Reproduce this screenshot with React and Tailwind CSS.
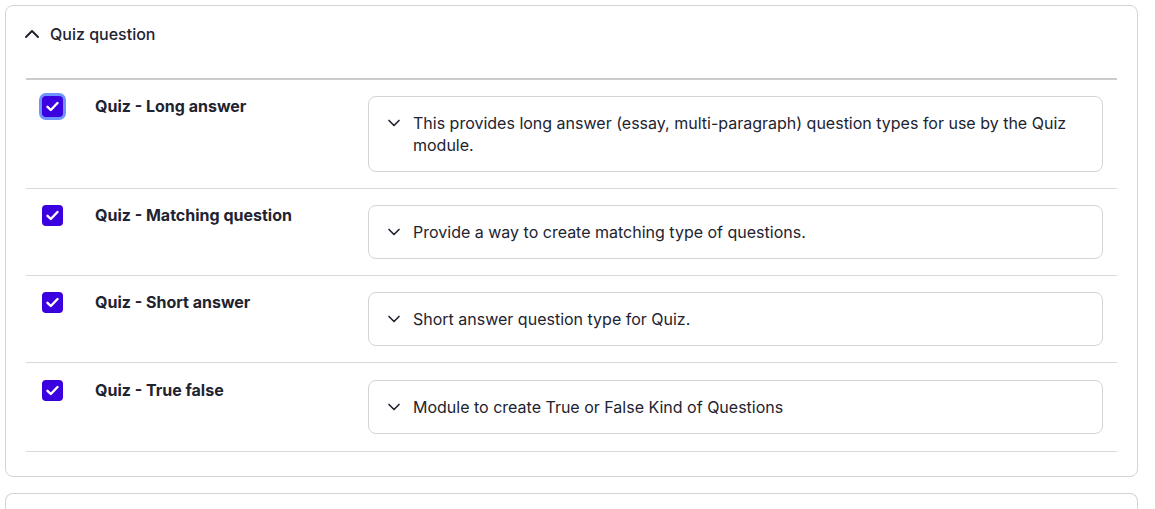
import { ChevronUp, ChevronDown } from 'lucide-react'

const rows = [
  { name: 'Quiz - Long answer', desc: 'This provides long answer (essay, multi-paragraph) question types for use by the Quiz module.', focus: true },
  { name: 'Quiz - Matching question', desc: 'Provide a way to create matching type of questions.' },
  { name: 'Quiz - Short answer', desc: 'Short answer question type for Quiz.' },
  { name: 'Quiz - True false', desc: 'Module to create True or False Kind of Questions' },
]

function Check({ focus }) {
  return (
    <span className={`flex h-[21px] w-[21px] items-center justify-center rounded-[4px] bg-[#3b00e0] ${focus ? 'ring-[3px] ring-[#6f93ff]' : ''}`}>
      <svg width="13" height="11" viewBox="0 0 13 11" fill="none">
        <path d="M1.5 5.8 L4.8 9 L11.5 2" stroke="white" strokeWidth="2.4" strokeLinecap="round" strokeLinejoin="round" />
      </svg>
    </span>
  )
}

export default function App() {
  return (
    <div className="bg-white pl-[5px] pr-[17px] pt-[5px] text-[#222330]" style={{ fontFamily: 'Inter, "Noto Sans", sans-serif' }}>
      <div className="rounded-lg border border-[#d4d4d8] px-5 pb-6">
        <div className="flex h-[56px] items-center gap-[6px] pb-[1px]">
          <ChevronUp size={24} strokeWidth={2} className="-ml-[6px] text-[#222330]" />
          <span className="text-[16px] font-medium">Quiz question</span>
        </div>
        <div className="mt-[16px] border-t-2 border-[#cccccc]">
          {rows.map(r => (
            <div key={r.name} className="flex border-b border-[#d9d9dc] py-4 last:pb-[17px] last:pt-[17px]">
              <div className="w-[53px] shrink-0 pl-4">
                <Check focus={r.focus} />
              </div>
              <div className="-mt-[1px] w-[273px] shrink-0 pl-4 text-[16px] font-bold leading-[22px]">{r.name}</div>
              <div className="flex-1 pl-4 pr-[14px]">
                <div className="flex gap-[9px] rounded-lg border border-[#d4d4d8] py-[15px] pl-[15px] pr-5 text-[16px] leading-[22px]">
                  <ChevronDown size={20} strokeWidth={2} className="mt-[1px] shrink-0" />
                  <span>{r.desc}</span>
                </div>
              </div>
            </div>
          ))}
        </div>
      </div>
      <div className="mt-4 h-10 rounded-t-lg border border-b-0 border-[#d4d4d8]" />
    </div>
  )
}
